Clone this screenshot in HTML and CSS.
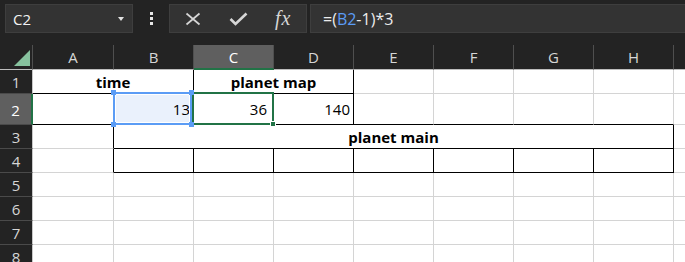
FILE: index.html
```html
<!DOCTYPE html>
<html lang="en">
<head>
    <meta charset="UTF-8">
    <meta name="viewport" content="width=device-width, initial-scale=1.0">
    <title>planet sheet</title>
    <link rel="stylesheet" href="styles.css">
</head>
<body>
    <!-- formula bar -->
    <div class="topbar">
        <div class="namebox"><span>C2</span><span class="caret"></span></div>
        <div class="dots"><i></i><i></i><i></i></div>
        <div class="fxbox">
            <svg class="cancel" width="16" height="14" viewBox="0 0 16 14"><path d="M1.5 1.5 L14.5 12.5 M14.5 1.5 L1.5 12.5" stroke="#d6d6d6" stroke-width="1.7" fill="none"/></svg>
            <svg class="enter" width="19" height="14" viewBox="0 0 19 14"><path d="M1.5 7 L6.5 12 L17.5 1.5" stroke="#d6d6d6" stroke-width="2.6" fill="none"/></svg>
            <span class="fx">fx</span>
        </div>
        <div class="formula">=(<span class="refname">B2</span>-1)*3</div>
    </div>

    <!-- sheet -->
    <div class="sheet">
        <div class="corner"><span class="tri"></span></div>
        <div class="colhead">A</div>
        <div class="colhead">B</div>
        <div class="colhead sel">C</div>
        <div class="colhead">D</div>
        <div class="colhead">E</div>
        <div class="colhead">F</div>
        <div class="colhead">G</div>
        <div class="colhead">H</div>
        <div class="colhead filler"></div>

        <div class="rowhead">1</div>
        <div class="cell bold span2 bb br">time</div>
        <div class="cell bold span2 bb br">planet map</div>
        <div class="cell"></div><div class="cell"></div><div class="cell"></div><div class="cell"></div>
        <div class="cell filler"></div>

        <div class="rowhead sel">2</div>
        <div class="cell bb"></div>
        <div class="cell num refcell bb br">13
            <div class="refbox"><i class="handle tl"></i><i class="handle tr"></i><i class="handle bl"></i><i class="handle brh"></i></div>
        </div>
        <div class="cell num activecell bb br">36
            <div class="activebox"><i class="fillhandle"></i></div>
        </div>
        <div class="cell num bb br">140</div>
        <div class="cell bb"></div><div class="cell bb"></div><div class="cell bb"></div><div class="cell bb"></div>
        <div class="cell filler"></div>

        <div class="rowhead">3</div>
        <div class="cell br"></div>
        <div class="cell bold span7 bb br">planet main</div>
        <div class="cell filler"></div>

        <div class="rowhead">4</div>
        <div class="cell br"></div>
        <div class="cell bb br"></div><div class="cell bb br"></div><div class="cell bb br"></div><div class="cell bb br"></div>
        <div class="cell bb br"></div><div class="cell bb br"></div><div class="cell bb br"></div>
        <div class="cell filler"></div>

        <div class="rowhead">5</div>
        <div class="cell"></div><div class="cell"></div><div class="cell"></div><div class="cell"></div>
        <div class="cell"></div><div class="cell"></div><div class="cell"></div><div class="cell"></div>
        <div class="cell filler"></div>

        <div class="rowhead">6</div>
        <div class="cell"></div><div class="cell"></div><div class="cell"></div><div class="cell"></div>
        <div class="cell"></div><div class="cell"></div><div class="cell"></div><div class="cell"></div>
        <div class="cell filler"></div>

        <div class="rowhead">7</div>
        <div class="cell"></div><div class="cell"></div><div class="cell"></div><div class="cell"></div>
        <div class="cell"></div><div class="cell"></div><div class="cell"></div><div class="cell"></div>
        <div class="cell filler"></div>

        <div class="rowhead">8</div>
        <div class="cell"></div><div class="cell"></div><div class="cell"></div><div class="cell"></div>
        <div class="cell"></div><div class="cell"></div><div class="cell"></div><div class="cell"></div>
        <div class="cell filler"></div>
    </div>
</body>
</html>
```

FILE: styles.css
```css
* {
    box-sizing: border-box;
}
body {
    margin: 0;
    height: 262px;
    overflow: hidden;
    background-color: #232323;
    font-family: "Open Sans", "Noto Sans", sans-serif;
}

/* formula bar */
.topbar {
    display: flex;
    align-items: flex-start;
    height: 45px;
    padding: 4px 0 0 5px;
}
.namebox {
    display: flex;
    align-items: center;
    width: 128px;
    height: 29px;
    padding: 0 8px 0 7px;
    background-color: #333333;
    border: 1px solid #3e3e3e;
    color: #f2f2f2;
    font-size: 15px;
}
.caret {
    margin-left: auto;
    border-top: 4px solid #e2e2e2;
    border-left: 3px solid transparent;
    border-right: 3px solid transparent;
}
.dots {
    display: flex;
    flex-direction: column;
    align-items: center;
    gap: 2px;
    width: 36px;
    padding-top: 8px;
}
.dots i {
    width: 3px;
    height: 3px;
    background-color: #e6e6e6;
}
.fxbox {
    display: flex;
    align-items: center;
    width: 138px;
    height: 29px;
    padding-left: 15px;
    background-color: #333333;
    border: 1px solid #3e3e3e;
}
.cancel {
    margin-top: 1px;
}
.enter {
    margin-left: 28px;
}
.fx {
    margin-left: 27px;
    font-family: "Liberation Serif", serif;
    font-style: italic;
    font-size: 20px;
    letter-spacing: 1px;
    color: #d6d6d6;
}
.formula {
    flex: 1;
    height: 29px;
    margin-left: 3px;
    padding: 1px 0 0 12px;
    background-color: #333333;
    border: 1px solid #3e3e3e;
    border-right: 0;
    color: #ececec;
    font-size: 16px;
    line-height: 27px;
}
.refname {
    color: #5b9cf5;
}

/* sheet grid */
.sheet {
    display: grid;
    grid-template-columns: 33px 81px repeat(7, 80px) 1fr;
    grid-template-rows: 25px 24px 31px repeat(6, 24px);
}
.corner,
.colhead,
.rowhead {
    background-color: #232323;
    color: #d6d6d6;
    font-size: 15px;
}
.corner {
    display: flex;
    justify-content: flex-end;
    align-items: flex-end;
    padding: 0 2px 3px 0;
    border-right: 1px solid #4f4f4f;
    border-bottom: 1px solid #bdbdbd;
}
.tri {
    width: 0;
    height: 0;
    border-left: 16px solid transparent;
    border-bottom: 16px solid #87c29e;
}
.colhead {
    text-align: center;
    line-height: 25px;
    border-right: 1px solid #4f4f4f;
    border-bottom: 1px solid #bdbdbd;
}
.colhead.filler {
    border-right: 0;
}
.colhead.sel {
    background-color: #5f5f5f;
    color: #ffffff;
    border-bottom: 2px solid #217346;
}
.rowhead {
    display: flex;
    justify-content: center;
    align-items: center;
    padding-top: 1px;
    border-right: 1px solid #c8c8c8;
    border-bottom: 1px solid #4a4a4a;
}
.rowhead.sel {
    background-color: #5f5f5f;
    color: #ffffff;
    border-right: 2px solid #217346;
}

.cell {
    display: flex;
    align-items: center;
    padding: 1px 3px 0;
    background-color: #ffffff;
    border-right: 1px solid #d4d4d4;
    border-bottom: 1px solid #d4d4d4;
    color: #000000;
    font-size: 15px;
}
.cell.filler {
    border-right: 0;
}
.num {
    justify-content: flex-end;
    padding-top: 0;
}
.bold {
    justify-content: center;
    font-weight: 700;
}
.span2 {
    grid-column: span 2;
}
.span7 {
    grid-column: span 7;
}
.bb {
    border-bottom-color: #000000;
}
.br {
    border-right-color: #000000;
}

/* B2 reference highlight */
.refcell {
    position: relative;
    background-color: #eaf1fc;
}
.refbox {
    position: absolute;
    z-index: 3;
    top: -2px;
    left: -1px;
    right: 1px;
    bottom: -1px;
    border: 2px solid #5b9cf5;
    box-shadow: inset 0 0 0 1px #ffffff;
}
.handle {
    position: absolute;
    width: 5px;
    height: 5px;
    background-color: #5b9cf5;
}
.tl { top: -4px; left: -4px; }
.tr { top: -4px; right: -4px; }
.bl { bottom: -4px; left: -4px; }
.brh { bottom: -4px; right: -4px; }

/* C2 active cell */
.activecell {
    position: relative;
    padding-right: 6px;
}
.activebox {
    position: absolute;
    z-index: 2;
    top: -2px;
    left: -2px;
    right: -1px;
    bottom: -1px;
    border: 2px solid #217346;
}
.fillhandle {
    position: absolute;
    right: -4px;
    bottom: -4px;
    width: 6px;
    height: 6px;
    background-color: #217346;
    border: 1px solid #ffffff;
}
```
